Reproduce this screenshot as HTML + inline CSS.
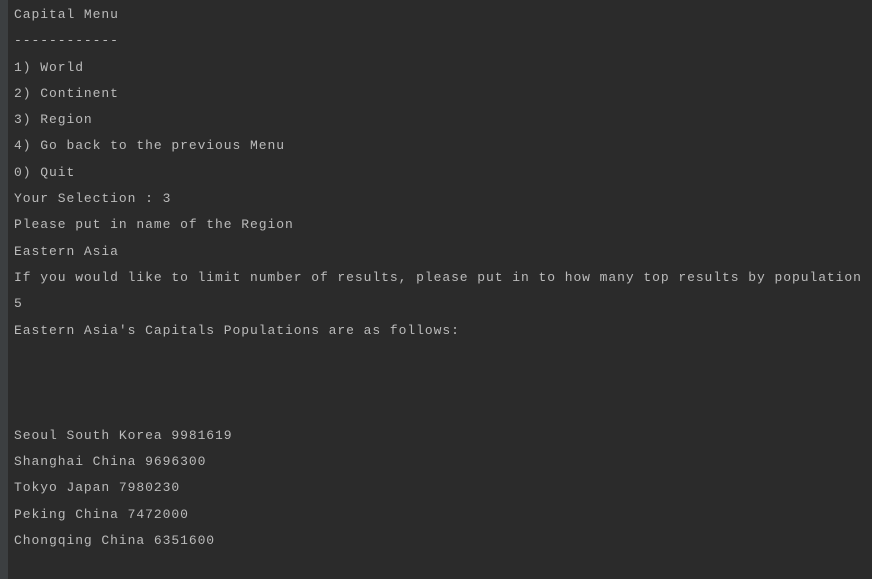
<!DOCTYPE html>
<html><head><meta charset="utf-8"><style>
html,body{margin:0;padding:0;width:872px;height:579px;overflow:hidden;background:#2b2b2b;}
.bar{position:absolute;left:0;top:0;width:8px;height:579px;background:#3c3f41;}
pre{position:absolute;left:14px;top:2px;margin:0;font-family:"Liberation Mono",monospace;font-size:13px;letter-spacing:0.94px;line-height:26.3px;color:#bbbbbb;white-space:pre;}
</style></head><body>
<div class="bar"></div>
<pre>Capital Menu
------------
1) World
2) Continent
3) Region
4) Go back to the previous Menu
0) Quit
Your Selection : 3
Please put in name of the Region
Eastern Asia
If you would like to limit number of results, please put in to how many top results by population
5
Eastern Asia's Capitals Populations are as follows:



Seoul South Korea 9981619
Shanghai China 9696300
Tokyo Japan 7980230
Peking China 7472000
Chongqing China 6351600</pre>
</body></html>
